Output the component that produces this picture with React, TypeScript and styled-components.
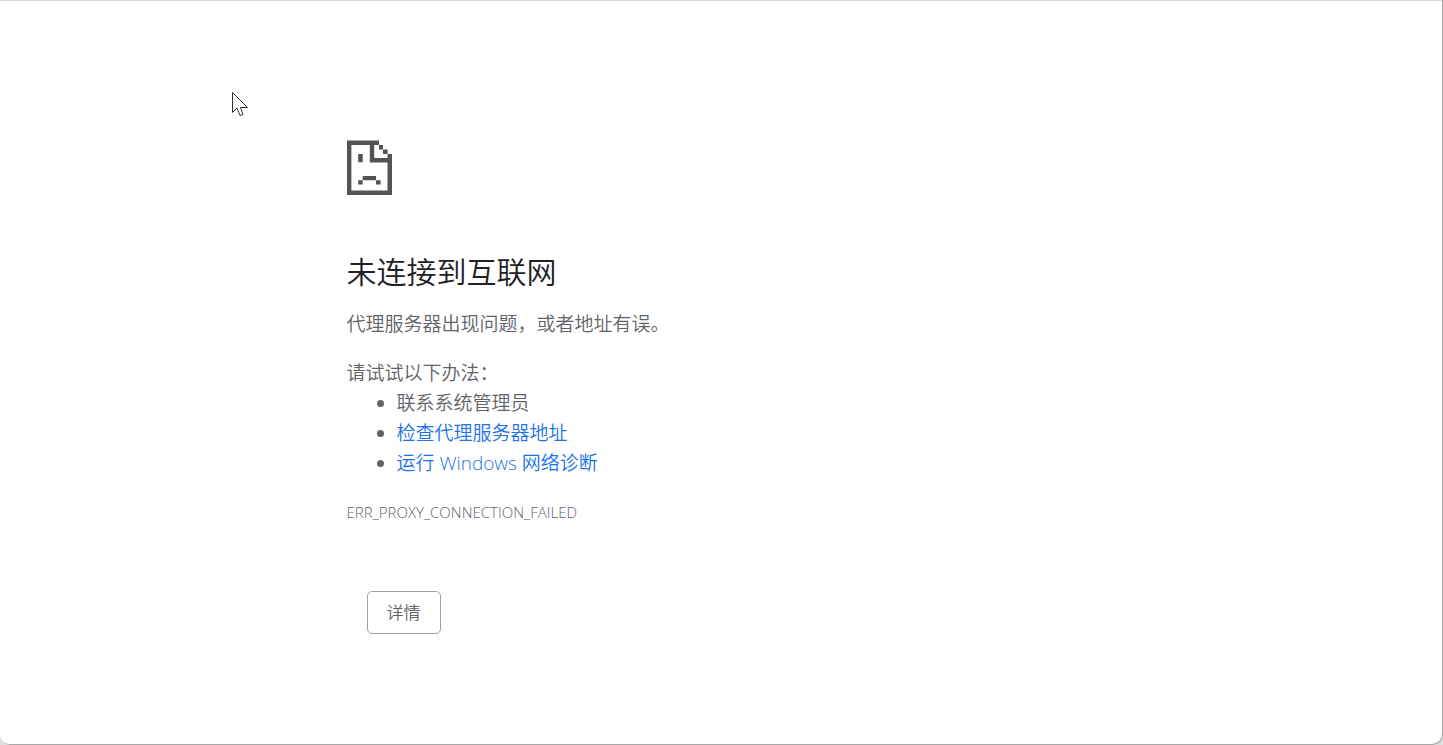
import React from "react";
import styled, { createGlobalStyle } from "styled-components";

const GlobalStyle = createGlobalStyle`
  * { box-sizing: border-box; }
  body {
    margin: 0;
    background: #dedede;
    color: #5f6368;
    font-family: "Open Sans", "Noto Sans CJK SC", sans-serif;
    font-weight: 350;
  }
`;

const Frame = styled.div`
  position: relative;
  min-height: 100vh;
  padding: 140px 24px 24px;
  background: #fff;
  box-shadow: inset -1px -1px 0 #a9a9a9, inset 0 1px 0 #d9d9d9;
  border-radius: 0 0 10px 10px;
`;

const Content = styled.main`
  max-width: 750px;
  margin: 0 auto;
  font-size: 19px;
  line-height: 30px;
`;

const SadPage = styled.svg`
  display: block;
  width: 45px;
  height: 55px;
  fill: #535353;
`;

const Title = styled.h1`
  margin: 58px 0 18px;
  color: #202124;
  font-size: 30px;
  font-weight: inherit;
  line-height: 38px;
`;

const Paragraph = styled.p`
  margin: 0;
`;

const Suggestions = styled.section`
  margin-top: 19px;
`;

const List = styled.ul`
  margin: 0;
  padding-left: 50px;
`;

const Link = styled.a`
  color: #1a73e8;
  text-decoration: none;
`;

const ErrorCode = styled.p`
  margin: 22px 0 0;
  font-size: 15px;
  font-weight: 300;
  line-height: 24px;
`;

const DetailsButton = styled.button`
  display: block;
  margin: 67px 0 0 20px;
  padding: 8px 19px;
  border: 1px solid #9aa0a6;
  border-radius: 5px;
  background: #fff;
  color: #5f6368;
  font-family: inherit;
  font-size: 17px;
  font-weight: inherit;
  line-height: 25px;
  cursor: pointer;
`;

const Pointer = styled.svg`
  position: absolute;
  top: 91px;
  left: 231px;
  width: 18px;
  height: 26px;
`;

export default function App() {
  return (
    <>
      <GlobalStyle />
      <Frame>
        <Content>
          <SadPage viewBox="0 0 45 55" aria-hidden="true">
            <path d="M0 .6H32V5H27.200V18H40.500V14H45V54.900H0ZM4.400 5V50.600H40.500V22.400H22.800V5Z" fillRule="evenodd" />
            <path d="M32 5h4v4.400h-4zM36 9.400h4.600v4.600h-4.600zM11.200 14h4.500v8.200h-4.500zM15.700 36h13.300v4.200H15.700zM11.200 40.200h4.500v4.400h-4.500zM29 40.200h4.600v4.400h-4.600z" />
          </SadPage>
          <Title>未连接到互联网</Title>
          <Paragraph>代理服务器出现问题，或者地址有误。</Paragraph>
          <Suggestions>
            <Paragraph>请试试以下办法：</Paragraph>
            <List>
              <li>联系系统管理员</li>
              <li><Link href="#proxy">检查代理服务器地址</Link></li>
              <li><Link href="#diagnose">运行 Windows 网络诊断</Link></li>
            </List>
          </Suggestions>
          <ErrorCode>ERR_PROXY_CONNECTION_FAILED</ErrorCode>
          <DetailsButton type="button">详情</DetailsButton>
        </Content>
        <Pointer viewBox="0 0 18 26" aria-hidden="true">
          <path d="M1.500 1.500V21.500L6 17L9 24.500L12 23.500L9.500 16.500H16.500Z" fill="#fff" stroke="#333" />
        </Pointer>
      </Frame>
    </>
  );
}
